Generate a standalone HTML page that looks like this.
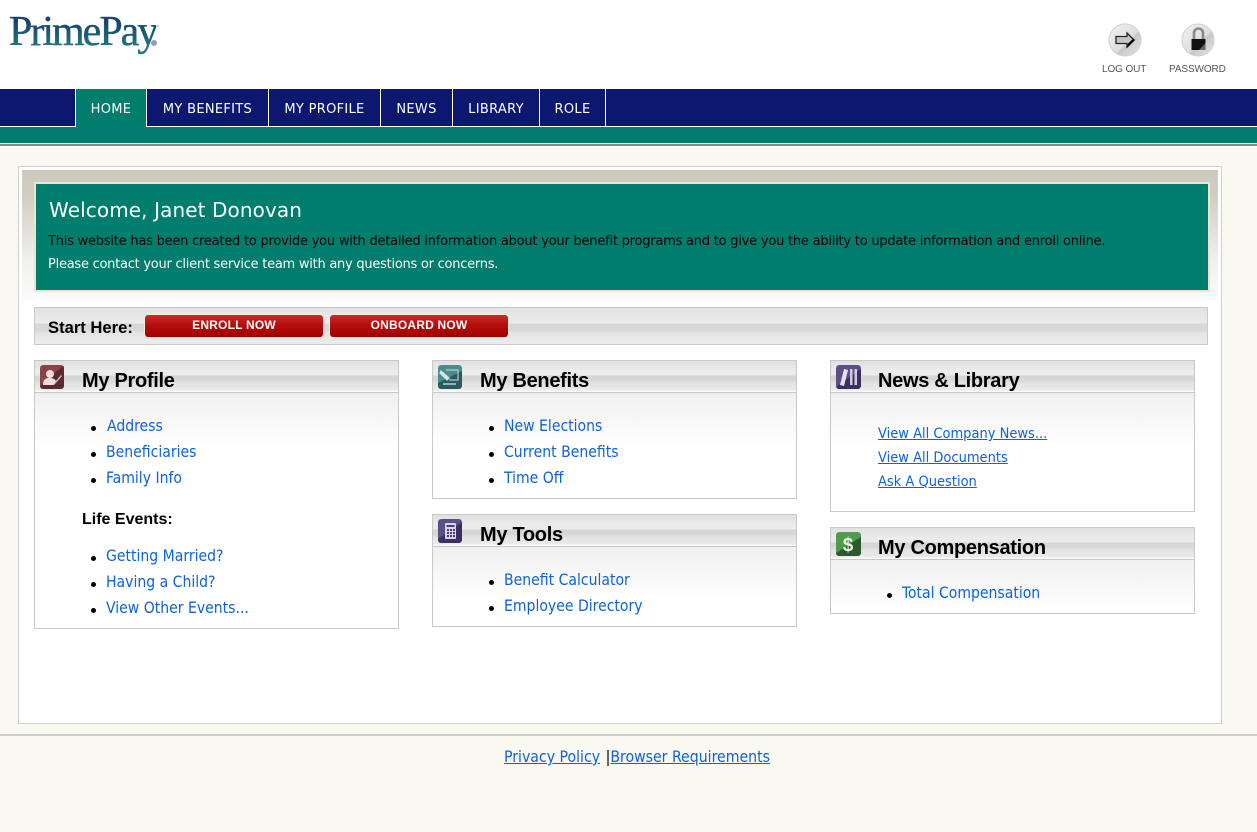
<!DOCTYPE html>
<html><head><meta charset="utf-8"><title>PrimePay</title>
<style>
html,body{margin:0;padding:0}
body{width:1257px;height:832px;position:relative;overflow:hidden;background:#f9f8f1;font-family:"Liberation Sans",sans-serif}
.a{position:absolute;white-space:nowrap}
a{color:#0f63d6;text-decoration:none}
.nav{position:absolute;top:89px;height:37px;color:#fff;font:13px/41px "DejaVu Sans",sans-serif;letter-spacing:.3px;text-align:center;border-right:1px solid #fff;box-sizing:content-box}
.panel{position:absolute;width:363px;border:1px solid #c9c9c9;background:linear-gradient(#ececec 32px,#f0f0f0 33px,#fff 85px,#fff)}
.head{position:absolute;left:0;top:0;width:363px;height:31px;border-bottom:1px solid #c8c8c8;background:linear-gradient(#e0e0e0 0,#ebebeb 10px,#ebebeb 14px,#d6d6d6 15px,#d6d6d6 19px,#e2e2e2 22px,#eaeaea 29px,#fafafa 30px)}
.t{position:absolute;left:47px;top:8px;font:bold 20px/24px "Liberation Sans",sans-serif;color:#000;letter-spacing:-.3px}
.ic{position:absolute;left:5px;top:4px;width:24px;height:24px;border-radius:3px}
.l{position:absolute;font:15.6px/20px "DejaVu Sans",sans-serif;font-stretch:condensed;white-space:nowrap}
.d{position:absolute;width:5px;height:5px;border-radius:50%;background:#000;margin-top:1px}
.u{text-decoration:underline;font-size:14.5px;margin-top:1px}
.btn{position:absolute;top:315px;height:22px;width:178px;border-radius:3px;background:linear-gradient(#cc2a2a,#b50f0f 45%,#a00000);color:#fff;font:bold 12px/21px "Liberation Sans",sans-serif;letter-spacing:.2px;text-align:center;box-shadow:0 0 0 1px #f5ecd9}
</style></head><body>

<div class="a" style="left:0;top:0;width:1257px;height:89px;background:#fff"></div>
<div class="a" style="left:9px;top:5px;font:42px/54px 'Liberation Serif',serif;letter-spacing:-2px;background:linear-gradient(#17406f 30%,#1f7d7d 80%);-webkit-background-clip:text;background-clip:text;color:transparent;-webkit-text-stroke:.3px #1f5a78">PrimePay</div>
<div class="a" style="left:151px;top:40px;width:6px;height:6px;border-radius:50%;background:#8f9fb8"></div>

<svg class="a" style="left:1107px;top:22px" width="36" height="36" viewBox="0 0 36 36"><defs><linearGradient id="g" x1="0" y1="0" x2="1" y2="1"><stop offset="0" stop-color="#f2f2f2"/><stop offset=".55" stop-color="#dedede"/><stop offset=".6" stop-color="#c8c8c8"/><stop offset="1" stop-color="#e8e8e8"/></linearGradient></defs><circle cx="18" cy="18" r="16" fill="url(#g)" stroke="#cfcfcf"/><path d="M9 14.500h11V11l7 7-7 7v-3.500H9z" fill="#c4c4c4" stroke="#222" stroke-width="1.300"/><path d="M20 26l8-8-1.500-1.500L21 21.500z" fill="#000"/></svg>
<svg class="a" style="left:1180px;top:22px" width="36" height="36" viewBox="0 0 36 36"><circle cx="18" cy="18" r="16" fill="url(#g)" stroke="#cfcfcf"/><path d="M14 17v-6a4.500 4.500 0 0 1 9 0v6" fill="none" stroke="#8a8a8a" stroke-width="2.600"/><rect x="11.500" y="17" width="14" height="11" fill="#111"/><path d="M19 28l6.500-7v7z" fill="#666"/></svg>
<div class="a" style="left:1102px;top:63px;font:10px/13px 'Liberation Sans',sans-serif;color:#555;letter-spacing:-.1px">LOG OUT</div>
<div class="a" style="left:1169px;top:63px;font:10px/13px 'Liberation Sans',sans-serif;color:#555;letter-spacing:-.1px">PASSWORD</div>

<div class="a" style="left:0;top:89px;width:1257px;height:37px;background:#0c1770"></div>
<div class="a" style="left:0;top:126px;width:1257px;height:1px;background:#fff"></div>
<div class="a" style="left:0;top:127px;width:1257px;height:16px;background:#007d6d"></div>
<div class="a" style="left:0;top:143px;width:1257px;height:1px;background:#fff"></div>
<div class="a" style="left:0;top:144px;width:1257px;height:2px;background:#8a8780"></div>

<div class="nav" style="left:75px;width:70px;height:38px;background:#007d6d;border-left:1px solid #fff">HOME</div>
<div class="nav" style="left:147px;width:121px">MY BENEFITS</div>
<div class="nav" style="left:269px;width:111px">MY PROFILE</div>
<div class="nav" style="left:381px;width:71px">NEWS</div>
<div class="nav" style="left:453px;width:86px">LIBRARY</div>
<div class="nav" style="left:540px;width:65px">ROLE</div>

<div class="a" style="left:18px;top:166px;width:1202px;height:556px;border:1px solid #cfcfcf;background:#fff"></div>
<div class="a" style="left:22px;top:170px;width:1196px;height:130px;background:linear-gradient(#cdc9bd 0,#d0cdc3 25px,#f0f0ee 90px,#fbfbfb 130px)"></div>
<div class="a" style="left:34px;top:182px;width:1176px;height:110px;background:#eee3d0"></div>
<div class="a" style="left:36px;top:184px;width:1172px;height:106px;background:#007d6d"></div>
<div class="a" style="left:49px;top:197px;font:20px/26px 'DejaVu Sans',sans-serif;color:#fff;letter-spacing:.1px">Welcome, Janet Donovan</div>
<div class="a" style="left:48px;top:233px;font:13px/17px 'DejaVu Sans',sans-serif;color:#000;letter-spacing:-.22px">This website has been created to provide you with detailed information about your benefit programs and to give you the ability to update information and enroll online.</div>
<div class="a" style="left:48px;top:256px;font:13px/17px 'DejaVu Sans',sans-serif;color:#fff;letter-spacing:-.25px">Please contact your client service team with any questions or concerns.</div>

<div class="a" style="left:34px;top:307px;width:1172px;height:36px;border:1px solid #c9c9c9;background:linear-gradient(#e2e2e2 0,#ebebeb 15px,#d8d8d8 16px,#d8d8d8 22px,#e4e4e4 25px,#ececec 36px)"></div>
<div class="a" style="left:48px;top:318px;font:bold 16.6px/19px 'Liberation Sans',sans-serif;color:#000">Start Here:</div>
<div class="btn" style="left:145px">ENROLL NOW</div>
<div class="btn" style="left:330px">ONBOARD NOW</div>

<!-- My Profile -->
<div class="panel" style="left:34px;top:360px;height:267px">
<div class="head"></div>
<svg class="ic" viewBox="0 0 24 24"><rect width="24" height="24" rx="3" fill="#8a4446"/><path d="M0 24V21L24 0V21a3 3 0 0 1-3 3z" fill="#5a2a2e"/><circle cx="10" cy="9" r="4" fill="#f1dfdf"/><path d="M3 20c0-6 3-7 7-7s6 2 6 4l-2 3z" fill="#f1dfdf"/><path d="M14 18l7-8 1 1-7 8-2 1z" fill="#d9bcbc"/></svg>
<div class="t">My Profile</div>
<span class="d" style="left:56px;top:64px"></span><a class="l" style="left:72px;top:55px">Address</a>
<span class="d" style="left:56px;top:90px"></span><a class="l" style="left:71px;top:81px">Beneficiaries</a>
<span class="d" style="left:56px;top:116px"></span><a class="l" style="left:71px;top:107px">Family Info</a>
<div class="a" style="left:47px;top:149px;font:bold 16px/20px 'Liberation Sans',sans-serif;color:#000">Life Events:</div>
<span class="d" style="left:56px;top:194px"></span><a class="l" style="left:71px;top:185px">Getting Married?</a>
<span class="d" style="left:56px;top:220px"></span><a class="l" style="left:71px;top:211px">Having a Child?</a>
<span class="d" style="left:56px;top:246px"></span><a class="l" style="left:71px;top:237px">View Other Events...</a>
</div>

<!-- My Benefits -->
<div class="panel" style="left:432px;top:360px;height:137px">
<div class="head"></div>
<svg class="ic" viewBox="0 0 24 24"><rect width="24" height="24" rx="3" fill="#4a8c8c"/><path d="M0 24V18L24 6V21a3 3 0 0 1-3 3z" fill="#2a5a60"/><path d="M8 5h12v10H11" fill="none" stroke="#cfe2e2" stroke-width="1"/><path d="M3 6l8 7-2 2-7-7zM5 19h13" stroke="#d5e6e6" stroke-width="1.200" fill="#d5e6e6"/></svg>
<div class="t">My Benefits</div>
<span class="d" style="left:56px;top:64px"></span><a class="l" style="left:71px;top:55px">New Elections</a>
<span class="d" style="left:56px;top:90px"></span><a class="l" style="left:71px;top:81px">Current Benefits</a>
<span class="d" style="left:56px;top:116px"></span><a class="l" style="left:71px;top:107px">Time Off</a>
</div>

<!-- My Tools -->
<div class="panel" style="left:432px;top:514px;height:111px">
<div class="head"></div>
<svg class="ic" viewBox="0 0 24 24"><rect width="24" height="24" rx="3" fill="#5b4f86"/><path d="M0 24V20L24 3V21a3 3 0 0 1-3 3z" fill="#3a3160"/><rect x="7" y="4" width="11" height="16" rx="1" fill="#d9d5e8"/><path d="M8.500 6h8v2h-8zM9 10h2v2H9zM12 10h2v2h-2zM15 10h2v2h-2zM9 13h2v2H9zM12 13h2v2h-2zM15 13h2v2h-2zM9 16h2v2H9zM12 16h2v2h-2zM15 16h2v2h-2z" fill="#4a3f74"/></svg>
<div class="t">My Tools</div>
<span class="d" style="left:56px;top:64px"></span><a class="l" style="left:71px;top:55px">Benefit Calculator</a>
<span class="d" style="left:56px;top:90px"></span><a class="l" style="left:71px;top:81px">Employee Directory</a>
</div>

<!-- News & Library -->
<div class="panel" style="left:830px;top:360px;height:150px">
<div class="head"></div>
<svg class="ic" style="left:5px;top:4px;width:25px" viewBox="0 0 25 24"><rect width="25" height="24" rx="3" fill="#5b4f86"/><path d="M0 24V22L25 4V21a3 3 0 0 1-3 3z" fill="#3a3160"/><path d="M8 4l4 1-4 16-4-1z" fill="#e5e2f0"/><path d="M14 4h2.500v16H14zM18.500 4H21v16h-2.500z" fill="#cfcae2"/></svg>
<div class="t">News &amp; Library</div>
<a class="l u" style="left:47px;top:62px">View All Company News...</a>
<a class="l u" style="left:47px;top:86px">View All Documents</a>
<a class="l u" style="left:47px;top:110px">Ask A Question</a>
</div>

<!-- My Compensation -->
<div class="panel" style="left:830px;top:527px;height:85px">
<div class="head"></div>
<svg class="ic" style="left:5px;top:4px;width:25px" viewBox="0 0 25 24"><rect width="25" height="24" rx="3" fill="#4f9a4f"/><path d="M0 24V21L25 5V21a3 3 0 0 1-3 3z" fill="#2b5a2f"/><text x="12" y="19" text-anchor="middle" font-family="Liberation Sans" font-weight="bold" font-size="19" fill="#e8f3e8">$</text></svg>
<div class="t">My Compensation</div>
<span class="d" style="left:56px;top:64px"></span><a class="l" style="left:71px;top:55px">Total Compensation</a>
</div>

<div class="a" style="left:0;top:734px;width:1257px;height:2px;background:#cbcbcb"></div>
<div class="a" style="left:504px;top:747px;font:15.7px/20px 'DejaVu Sans',sans-serif;font-stretch:condensed;color:#000"><a style="text-decoration:underline">Privacy Policy</a> <span style="margin-left:1px">|</span><a style="text-decoration:underline">Browser Requirements</a></div>

</body></html>
